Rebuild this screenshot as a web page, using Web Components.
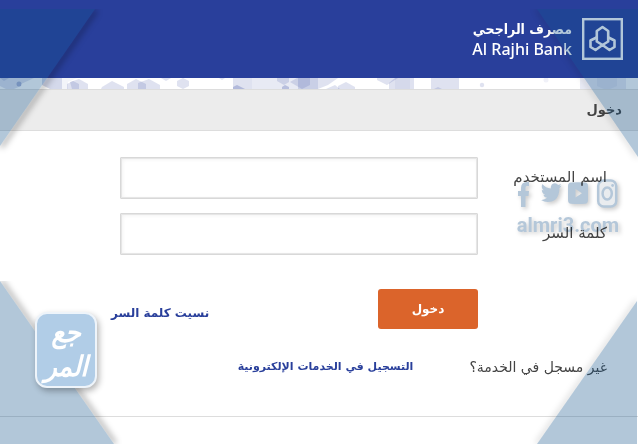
<!DOCTYPE html>
<html lang="ar" dir="rtl">
<head>
<meta charset="utf-8">
<title>مصرف الراجحي - دخول</title>
<style>
body { margin: 0; background: #fff; color: #444; font: 14px/20px "DejaVu Sans", "Noto Sans", sans-serif; }
</style>
</head>
<body>
<bank-page>
  <bank-header></bank-header>
  <hex-strip></hex-strip>
  <title-bar>دخول</title-bar>
  <login-form></login-form>
  <corner-watermark></corner-watermark>
</bank-page>

<script>
function define(name, html) {
  const template = document.createElement('template');
  template.innerHTML = html;
  customElements.define(name, class extends HTMLElement {
    constructor() {
      super();
      this.attachShadow({ mode: 'open' }).append(template.content.cloneNode(true));
    }
  });
}

define('bank-page', `
<style>:host { display: flex; flex-direction: column; position: relative; min-height: 100vh; overflow: hidden; }</style>
<slot></slot>`);

define('bank-header', `
<style>
:host { display: flex; align-items: center; gap: 10px; padding: 18px 15px; background: #293f9b; color: #fff; }
svg { width: 41px; height: 42px; display: block; }
.name { display: flex; flex-direction: column; align-items: flex-start; }
.ar { font: bold 14px/20px "DejaVu Sans Condensed", "DejaVu Sans", sans-serif; }
.en { font: 500 16px/20px "Noto Sans", "Open Sans", sans-serif; }
</style>
<svg viewBox="0 0 41 42" fill="none" stroke="#fff" aria-hidden="true">
  <rect x="1.2" y="1.2" width="38.6" height="39.6" stroke-width="2.4"/>
  <g stroke-width="2.600" stroke-linejoin="round">
    <path d="M20.500 9 L26.200 13 V23.500 L20.500 27 L14.800 23.500 V13 Z"/>
    <path d="M14.500 19.500 L8.500 22.500 V29 L13.500 32 L20.500 27 L27.500 32 L32.500 29 V22.500 L26.500 19.500"/>
  </g>
</svg>
<div class="name"><span class="ar">مصرف الراجحي</span><span class="en" dir="ltr">Al Rajhi Bank</span></div>`);

define('hex-strip', `
<style>:host { display: block; } svg { display: block; width: 100%; height: 11px; }</style>
<svg viewBox="0 0 638 11" preserveAspectRatio="xMidYMin slice" aria-hidden="true">
  <g fill="#293f9b" fill-opacity=".15">
    <path d="M0 0H21V8L14 11H6L0 8Z"/><path d="M0 0H9L4 3Z"/><path d="M21 0H34L21 6Z"/>
    <circle cx="19" cy="6" r="2.500" fill-opacity=".3"/>
    <path d="M42 0H62V11H50L42 7Z" fill-opacity=".2"/>
    <path d="M62 0H77L68 4V11H62Z" fill-opacity=".06"/>
    <path d="M67 11V6L73 3L79 6V11Z"/><path d="M70 4L79 1L88 6V11H72Z"/>
    <path d="M101 11L102 9L112 3L124 9V11Z"/>
    <path d="M127 11V6L136 1L146 6V11Z"/><path d="M138 11V5L149 1L160 7V11Z"/>
    <path d="M161 0H171L166 3Z"/><path d="M177 8V3L183 0L189 3V8L183 11Z"/>
    <path d="M219 0H225L222 2Z"/>
    <path d="M233 0H252V11H233Z"/><path d="M233 11V9L237 7L245 11Z" fill-opacity=".25"/>
    <path d="M252 0H298V11H252Z" fill-opacity=".11"/>
    <path d="M277 0H289V4L284 7L277 3Z"/><path d="M282 11V9L285 7L289 9V11Z" fill-opacity=".25"/>
    <path d="M290 4L297 0H310V7L302 11Z"/>
    <path d="M298 0H318V11H298Z" fill-opacity=".25"/><path d="M318 0H338L328 7L318 11Z"/>
    <path d="M326 11L335 7L340 11Z"/><path d="M338 8L346 4L355 9V11H338Z"/>
    <path d="M377 0H398L387 7L377 2Z"/><path d="M389 5L395 0H414V11H389Z"/>
    <path d="M395 0H410V11H395Z" fill-opacity=".05"/>
    <path d="M431 0H459V11H431Z"/><path d="M434 11L438 9L442 11Z"/>
    <circle cx="482" cy="7" r="2.200"/><circle cx="546" cy="2" r="2.500" fill-opacity=".07"/>
    <path d="M580 0H626V11H580Z" fill-opacity=".1"/><path d="M597 0H617V8L610 11H604L597 8Z" fill-opacity=".06"/>
  </g>
</svg>`);

define('title-bar', `
<style>
:host { display: block; background: #ececec; border: solid #ddd; border-width: 1px 0; padding: 10px 16px; }
h1 { margin: 0; font: bold 13px/20px "DejaVu Sans", sans-serif; color: #444; }
</style>
<h1><slot></slot></h1>`);

customElements.define('login-field', class extends HTMLElement {
  constructor() {
    super();
    this.attachShadow({ mode: 'open' }).innerHTML = `
<style>
:host { display: flex; }
label { flex: 0 0 129px; padding-top: 10px; font-size: 15px; }
input { flex: 1; min-width: 0; box-sizing: border-box; height: 42px; margin: 0; padding: 0 10px; border: 1px solid #d8d8d8; border-radius: 1px; background: #fff; box-shadow: inset 0 0 0 1px #e6e6e6, inset 1px 1px 4px #eee; font: inherit; color: inherit; }
</style>
<label for="field"><slot></slot></label>
<input id="field" type="${this.getAttribute('type') || 'text'}">`;
  }
});

define('login-form', `
<style>
:host { display: block; padding: 26px 31px 0 0; }
form { display: flex; flex-direction: column; gap: 14px; }
login-field { margin-left: 120px; }
.actions { display: flex; justify-content: space-between; align-items: center; margin: 20px 129px 0 111px; }
button { width: 100px; height: 40px; padding: 0; border: 0; border-radius: 3px; background: #db642b; color: #fff; font: bold 12px/20px "DejaVu Sans", sans-serif; }
a { color: #293f9b; font: bold 11px/20px "DejaVu Sans", sans-serif; text-decoration: none; }
.actions a { padding-top: 8px; font-size: 12px; }
.register { display: flex; align-items: center; gap: 56px; margin-top: 14px; }
hr { margin: 39px -31px 0 0; border: 0; border-top: 1px solid #ddd; }
</style>
<form>
  <login-field>اسم المستخدم</login-field>
  <login-field type="password">كلمة السر</login-field>
  <div class="actions"><button type="button">دخول</button><a href="#forgot">نسيت كلمة السر</a></div>
  <div class="register"><span>غير مسجل في الخدمة؟</span><a href="#register">التسجيل في الخدمات الإلكترونية</a></div>
</form>
<hr>`);

define('corner-watermark', `
<style>
:host { position: absolute; inset: 0; pointer-events: none; overflow: hidden; }
svg { display: block; }
.corner { position: absolute; fill: rgba(16, 82, 138, .32); overflow: visible; }
.edge { fill: none; stroke: #000; stroke-opacity: .35; stroke-width: 4; filter: blur(3px); }
.faint { stroke-opacity: .15; }
.tl { top: 9px; left: 0; } .tr { top: 9px; right: 0; }
.bl { bottom: 1px; left: 0; } .br { bottom: 1px; right: 1px; }
.social { position: absolute; top: 179px; right: 19px; display: flex; flex-direction: column; align-items: center; color: #b4c7d9; direction: ltr; mix-blend-mode: multiply; filter: drop-shadow(2px 2px 2px rgba(0, 0, 0, .2)); }
.site { font: bold 20px/32px "Roboto", sans-serif; }
.badge { position: absolute; left: 35px; top: 312px; box-sizing: border-box; width: 62px; height: 76px; border: 2px solid #eef4fa; border-radius: 12px; background: #b1cde7; box-shadow: 2px 3px 6px rgba(0, 0, 0, .3); color: #fff; display: flex; flex-direction: column-reverse; align-items: center; justify-content: center; font: italic bold 28px/34px "DejaVu Sans Condensed", "DejaVu Sans", sans-serif; }
</style>
<svg class="corner tl" width="95" height="137"><clipPath id="a"><path d="M95 0H130V170H0V137Z"/></clipPath><g clip-path="url(#a)"><path class="edge" d="M96 1L1 138"/></g><path d="M0 0H95L0 137Z"/></svg>
<svg class="corner tr" width="101" height="148"><clipPath id="b"><path d="M0 0L101 148V180H-30V0Z"/></clipPath><g clip-path="url(#b)"><path class="edge faint" d="M0 0L101 148"/></g><path d="M0 0H101V148Z"/></svg>
<svg class="corner bl" width="114" height="163"><clipPath id="c"><path d="M0 0H150V163H114Z"/></clipPath><g clip-path="url(#c)"><path class="edge" d="M1 0L115 163"/></g><path d="M0 0L114 163H0Z"/></svg>
<svg class="corner br" width="100" height="143"><clipPath id="d"><path d="M100 0V-20H-30V143H0Z"/></clipPath><g clip-path="url(#d)"><path class="edge faint" d="M100 0L0 143"/></g><path d="M100 0V143H0Z"/></svg>
<div class="social">
  <svg width="100" height="30" viewBox="0 0 100 30" fill="#b4c7d9" aria-hidden="true">
    <path d="M3 28V17H0V12H3V9Q3 3 9 3H11V7H9Q7.500 7 7.500 9V12H11L10.500 17H7.500V28Z"/>
    <path transform="translate(23 3)" d="M20.500 3.500Q19.500 4 18.200 4.200Q19.500 3.300 20 1.700Q18.600 2.600 17.200 2.900Q15.600 1 13.600 1.200Q9.500 1.800 9.800 6.500Q4.600 6.200 1.400 2Q-.5 5.600 2.700 8.300Q1.600 8.300.8 7.700Q1 11.500 4.200 12.600Q3.200 12.900 2.300 12.700Q3.200 15.600 6.100 15.800Q3.300 18.200 0 17.900Q3 20 6.700 20Q17.500 20 18.400 7.500V6.200Q19.700 5 20.500 3.500Z"/>
    <path fill-rule="evenodd" d="M53 3.500Q60 3 67 3.500Q70 3.800 70 7V21Q70 24.500 67 24.800Q60 25.300 53 24.800Q50 24.500 50 21V7Q50 3.800 53 3.500ZM57.500 10V18.500L64 14.200Z"/>
    <g stroke="#b4c7d9" stroke-width="2.500"><rect x="80.200" y="1.500" width="18" height="26" rx="5.500" fill="#e9ecef"/><ellipse cx="89.200" cy="14.500" rx="4.600" ry="6" fill="none"/></g><circle cx="94.600" cy="6.500" r="1.400"/>
  </svg>
  <span class="site">almri3.com</span>
</div>
<div class="badge"><span>المر</span><span>جع</span></div>`);
</script>
</body>
</html>
